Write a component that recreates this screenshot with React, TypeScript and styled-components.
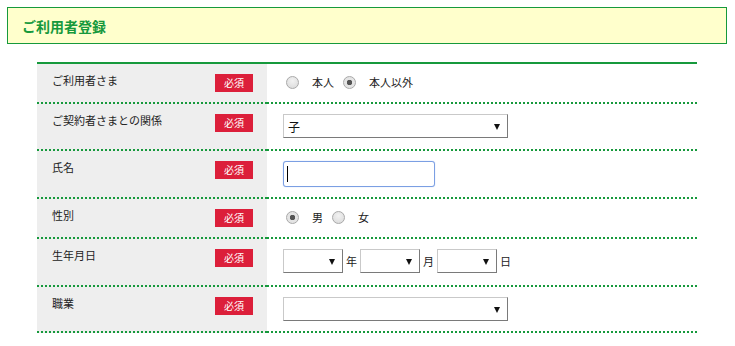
import styled, { createGlobalStyle } from 'styled-components'

const GREEN = '#16993c'

const GlobalStyle = createGlobalStyle`
  body {
    margin: 0;
    padding: 7px;
    background: #fff;
    font-family: "Noto Sans CJK JP", "Noto Sans", sans-serif;
    color: #222;
  }
`

type RowData = {
  label: string
  height: number
  kind: 'who' | 'relation' | 'name' | 'gender' | 'birth' | 'job'
}

const rows: RowData[] = [
  { label: 'ご利用者さま', height: 40, kind: 'who' },
  { label: 'ご契約者さまとの関係', height: 47, kind: 'relation' },
  { label: '氏名', height: 48, kind: 'name' },
  { label: '性別', height: 40, kind: 'gender' },
  { label: '生年月日', height: 48, kind: 'birth' },
  { label: '職業', height: 46, kind: 'job' },
]

const Select = ({ width, value }: { width: number; value?: string }) => (
  <SelectWrap $width={width}>
    <SelectBox defaultValue={value ?? ''}>
      <option value={value ?? ''}>{value ?? ''}</option>
    </SelectBox>
    <Arrow />
  </SelectWrap>
)

const Radio = ({ name, label, checked }: { name: string; label: string; checked?: boolean }) => (
  <RadioLabel>
    <RadioInput type="radio" name={name} defaultChecked={checked} />
    {label}
  </RadioLabel>
)

const renderField = (kind: RowData['kind']) => {
  switch (kind) {
    case 'who':
      return (
        <RadioGroup>
          <Radio name="who" label="本人" />
          <Radio name="who" label="本人以外" checked />
        </RadioGroup>
      )
    case 'relation':
      return <Select width={225} value="子" />
    case 'name':
      return (
        <InputWrap>
          <TextInput type="text" />
          <Caret />
        </InputWrap>
      )
    case 'gender':
      return (
        <RadioGroup>
          <Radio name="gender" label="男" checked />
          <Radio name="gender" label="女" />
        </RadioGroup>
      )
    case 'birth':
      return (
        <DateGroup>
          <Select width={60} />
          <Unit>年</Unit>
          <Select width={60} />
          <Unit>月</Unit>
          <Select width={60} />
          <Unit>日</Unit>
        </DateGroup>
      )
    case 'job':
      return <Select width={225} />
  }
}

const App = () => {
  return (
    <>
      <GlobalStyle />
      <Header>
        <Title>ご利用者登録</Title>
      </Header>
      <Form>
        {rows.map((row) => (
          <Row key={row.kind} $height={row.height}>
            <LabelCell>
              <LabelText>{row.label}</LabelText>
              <Required>必須</Required>
            </LabelCell>
            <ValueCell>{renderField(row.kind)}</ValueCell>
          </Row>
        ))}
      </Form>
    </>
  )
}

const Header = styled.div`
  width: 720px;
  height: 37px;
  box-sizing: border-box;
  border: 1px solid ${GREEN};
  background-color: #ffffcc;
  display: flex;
  align-items: center;
  padding-left: 14px;
`

const Title = styled.h1`
  margin: 0;
  font-size: 14px;
  font-weight: bold;
  color: ${GREEN};
  line-height: 1;
`

const Form = styled.div`
  width: 660px;
  margin: 18px 0 0 30px;
  border-top: 2px solid ${GREEN};
`

const Row = styled.div<{ $height: number }>`
  display: grid;
  grid-template-columns: 230px 1fr;
  height: ${(p) => p.$height}px;
`

const LabelCell = styled.div`
  background-color: #eeeeee;
  border-bottom: 2px dotted ${GREEN};
  display: flex;
  justify-content: space-between;
  align-items: flex-start;
  padding: 10px 14px 0 15px;
`

const LabelText = styled.span`
  font-size: 11px;
  line-height: 12px;
  color: #222;
`

const Required = styled.span`
  width: 38px;
  height: 18px;
  background-color: #dc1f3a;
  color: #fff;
  font-size: 10px;
  line-height: 18px;
  text-align: center;
`

const ValueCell = styled.div`
  border-bottom: 2px dotted ${GREEN};
  padding: 10px 0 0 16px;
  display: flex;
  align-items: flex-start;
`

const RadioGroup = styled.div`
  display: flex;
  align-items: center;
  height: 16px;
`

const DateGroup = styled.div`
  display: flex;
  align-items: center;
  height: 24px;
`

const RadioLabel = styled.label`
  display: inline-flex;
  align-items: center;
  gap: 13px;
  margin-right: 6px;
  font-size: 11px;
  color: #222;
`

const RadioInput = styled.input`
  appearance: none;
  margin: 0 0 0 3px;
  width: 13px;
  height: 13px;
  border-radius: 50%;
  border: 1px solid #a9a9a9;
  background: radial-gradient(circle at 50% 35%, #f2f2f2, #d8d8d8);
  box-sizing: border-box;

  &:checked {
    background: radial-gradient(circle, #555 0 2.5px, #e4e4e4 3px);
  }
`

const SelectWrap = styled.span<{ $width: number }>`
  position: relative;
  display: block;
  flex: none;
  width: ${(p) => p.$width}px;
  height: 24px;
`

const SelectBox = styled.select`
  appearance: none;
  display: block;
  width: 100%;
  height: 100%;
  box-sizing: border-box;
  margin: 0;
  padding: 0 20px 0 4px;
  border-style: solid;
  border-width: 1px;
  border-color: #c9c9c9 #7a7a7a #7a7a7a #c9c9c9;
  border-radius: 0;
  background: #fff;
  font-family: "Noto Sans CJK JP", "Noto Sans", sans-serif;
  font-size: 12px;
  color: #111;
  outline: none;
`

const Arrow = styled.span`
  position: absolute;
  right: 8px;
  top: 10px;
  width: 0;
  height: 0;
  border-left: 3px solid transparent;
  border-right: 3px solid transparent;
  border-top: 6px solid #111;
  pointer-events: none;
`

const Unit = styled.span`
  font-size: 11px;
  margin: 0 3px;
  color: #222;
`

const InputWrap = styled.div`
  position: relative;
  width: 152px;
  height: 26px;
`

const TextInput = styled.input`
  display: block;
  width: 100%;
  height: 100%;
  box-sizing: border-box;
  margin: 0;
  padding: 0 4px;
  border: 1px solid #7b9fe3;
  border-radius: 3px;
  font-size: 12px;
  outline: none;
  box-shadow: 0 0 1px #9db8ee;
`

const Caret = styled.span`
  position: absolute;
  left: 4px;
  top: 5px;
  width: 1px;
  height: 16px;
  background: #000;
`

export default App
